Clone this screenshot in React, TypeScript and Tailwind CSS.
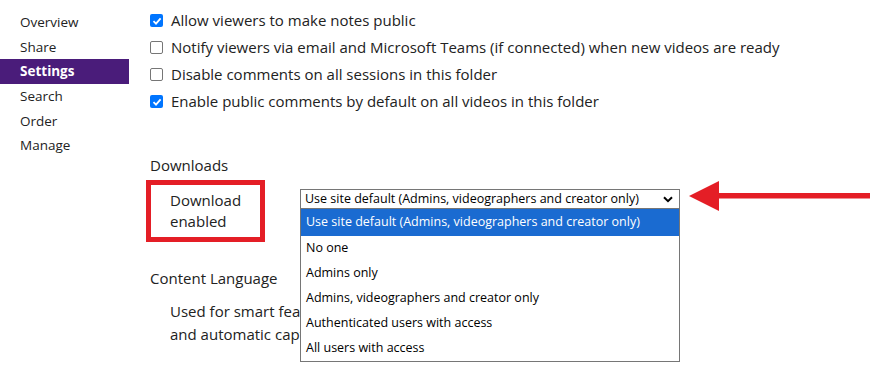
import React from 'react';

const navItems = ['Overview', 'Share', 'Settings', 'Search', 'Order', 'Manage'];

const checks = [
  { label: 'Allow viewers to make notes public', checked: true },
  { label: 'Notify viewers via email and Microsoft Teams (if connected) when new videos are ready', checked: false },
  { label: 'Disable comments on all sessions in this folder', checked: false },
  { label: 'Enable public comments by default on all videos in this folder', checked: true },
];

const options = [
  'Use site default (Admins, videographers and creator only)',
  'No one',
  'Admins only',
  'Admins, videographers and creator only',
  'Authenticated users with access',
  'All users with access',
];

const Box: React.FC<{ checked: boolean }> = ({ checked }) =>
  checked ? (
    <span className="w-[13px] h-[13px] rounded-[2px] bg-[#0075ff] flex items-center justify-center shrink-0">
      <svg width="10" height="10" viewBox="0 0 10 10">
        <path d="M1.5 5.2 L4 7.6 L8.6 2.4" stroke="white" strokeWidth="1.8" fill="none" />
      </svg>
    </span>
  ) : (
    <span className="w-[13px] h-[13px] rounded-[2px] border border-[#767676] bg-white shrink-0" />
  );

const App: React.FC = () => {
  return (
    <div
      className="relative w-[870px] h-[378px] bg-white overflow-hidden text-[#222]"
      style={{ fontFamily: '"Open Sans", "Noto Sans", sans-serif' }}
    >
      <div className="flex">
        <nav className="w-[129px] pt-[10px] shrink-0 text-[13.5px]">
          {navItems.map((item) => (
            <div
              key={item}
              className={
                item === 'Settings'
                  ? 'h-[24.6px] flex items-center pl-[20px] bg-[#4a1c7a] text-white font-bold'
                  : 'h-[24.6px] flex items-center pl-[20px]'
              }
            >
              {item}
            </div>
          ))}
        </nav>

        <main className="pl-[21px] pt-[7px] flex-1">
          <div className="flex flex-col">
            {checks.map((c) => (
              <div key={c.label} className="h-[27px] flex items-center gap-[8px] text-[15px]">
                <Box checked={c.checked} />
                <span>{c.label}</span>
              </div>
            ))}
          </div>

          <h2 className="mt-[40px] text-[15px] leading-[20px]">Downloads</h2>

          <div className="mt-[5px] flex items-start">
            <div className="-ml-[4px] w-[119px] h-[62px] border-[5px] border-[#e41e26] pl-[19px] pt-[5px] text-[15px] leading-[21px]">
              <div>Download</div>
              <div>enabled</div>
            </div>
            <div className="ml-[35px] mt-[9px] w-[380px] h-[20px] border border-[#767676] flex items-center justify-between pl-[4px] pr-[6px] text-[12.5px] text-black">
              <span>Use site default (Admins, videographers and creator only)</span>
              <svg width="10" height="7" viewBox="0 0 10 7">
                <path d="M1 1.2 L5 5.2 L9 1.2" stroke="black" strokeWidth="2" fill="none" />
              </svg>
            </div>
          </div>

          <h2 className="mt-[26px] text-[15px] leading-[20px]">Content Language</h2>
          <div className="mt-[12px] pl-[20px] text-[15px] leading-[23px]">
            <div>Used for smart features like search</div>
            <div>and automatic captions</div>
          </div>
        </main>
      </div>

      <ul className="absolute left-[300px] top-[209px] w-[380px] bg-white border-x border-b border-[#767676] text-[12.5px] text-black">
        {options.map((o, i) => (
          <li
            key={o}
            className={
              i === 0
                ? 'h-[27px] flex items-center pl-[5px] bg-[#1a6bd1] text-white'
                : 'h-[25px] flex items-center pl-[5px]'
            }
          >
            {o}
          </li>
        ))}
      </ul>

      <svg className="absolute left-[686px] top-[178px]" width="184" height="36" viewBox="0 0 184 36">
        <polygon points="3,18 33,3 33,33" fill="#e41e26" />
        <rect x="30" y="15" width="154" height="5.5" fill="#e41e26" />
      </svg>
    </div>
  );
};

export default App;
